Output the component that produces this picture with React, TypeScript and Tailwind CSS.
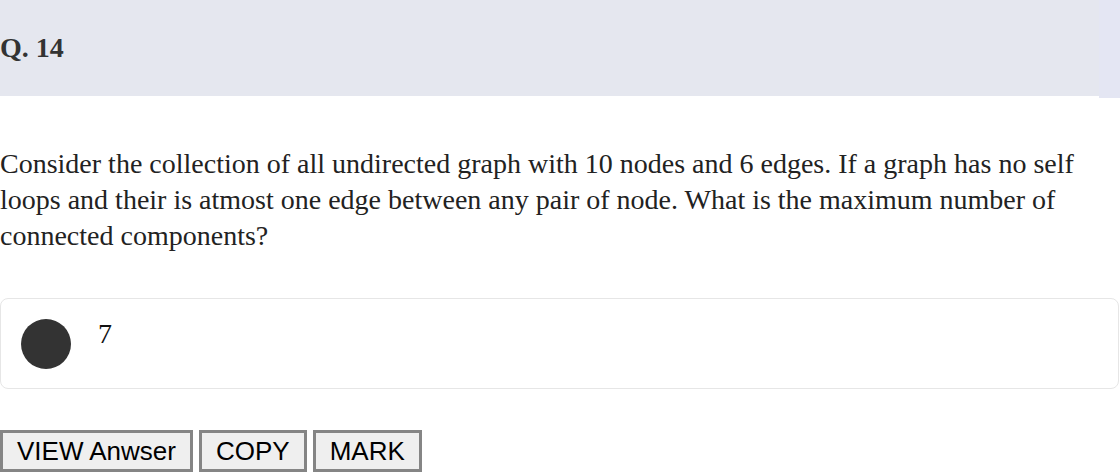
const buttons = ["VIEW Anwser", "COPY", "MARK"];

export default function App() {
  return (
    <div className="w-[1120px] h-[474px] overflow-hidden bg-white text-[#222] font-['Liberation_Serif',serif]">
      <div className="flex items-start">
        <div className="flex h-[96px] w-[1099px] items-center bg-[#e5e7ef]">
          <h2 className="text-[28px] font-bold text-[#333]">Q. 14</h2>
        </div>
        <div className="h-[98px] flex-1 bg-[#e4e6f3]"></div>
      </div>

      <p className="mt-[48px] w-[1120px] text-[28px] leading-[36px] text-[#222]">
        Consider the collection of all undirected graph with 10 nodes and 6 edges. If a graph has no self loops and
        their is atmost one edge between any pair of node. What is the maximum number of connected components?
      </p>

      <div className="mt-[44px] flex h-[91px] w-[1119px] items-start rounded-[8px] border border-[#e6e6e6] bg-white">
        <div className="ml-[20px] mt-[20px] h-[50px] w-[50px] rounded-full bg-[#333]"></div>
        <span className="ml-[27px] mt-[19px] text-[28px] leading-[31px] text-[#111]">7</span>
      </div>

      <div className="mt-[41px] flex gap-[6px]">
        {buttons.map((b) => (
          <button
            key={b}
            className="h-[42px] border-[3px] border-[#858585] bg-[#efefef] px-[14px] font-['Liberation_Sans',Arial,sans-serif] text-[26px] leading-[30px] text-black"
          >
            {b}
          </button>
        ))}
      </div>
    </div>
  );
}
